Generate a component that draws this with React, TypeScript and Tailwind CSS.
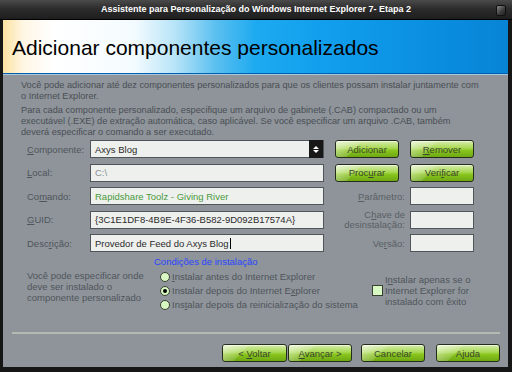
const font = "font-['Liberation_Sans',Arial,sans-serif]";

function U({ children }: { children: React.ReactNode }) {
  return <span className="underline underline-offset-[1px]">{children}</span>;
}

function GreenButton({ children, className = "" }: { children: React.ReactNode; className?: string }) {
  return (
    <div
      className={
        "relative flex h-[18px] w-[64px] items-center justify-center overflow-hidden rounded-[3px] border border-[#262c1c] bg-[linear-gradient(180deg,#d6ecae_0%,#a8d850_45%,#88c41c_60%,#6ea814_100%)] text-[9.5px] text-[#3a4630] shadow-[inset_0_1px_0_#eef8d8] " +
        className
      }
    >
      <span className="absolute left-0 top-0 h-full w-[45%] bg-[linear-gradient(135deg,rgba(255,255,255,0.55)_0%,rgba(255,255,255,0.15)_60%,transparent_61%)]" />
      <span className="relative">{children}</span>
    </div>
  );
}

function Field({ children, className = "" }: { children?: React.ReactNode; className?: string }) {
  return (
    <div
      className={
        "flex h-[18px] items-center border border-[#50555a] bg-[#eef0ee] px-[4px] text-[9.5px] text-[#2a2a2a] " + className
      }
    >
      {children}
    </div>
  );
}

function Radio({ checked = false }: { checked?: boolean }) {
  return (
    <span className="flex h-[10px] w-[10px] shrink-0 items-center justify-center rounded-full border border-[#3a4030] bg-[#d8f8c4]">
      {checked && <span className="h-[4px] w-[4px] rounded-full bg-black" />}
    </span>
  );
}

export default function App() {
  return (
    <div className={`flex h-[372px] w-[512px] flex-col bg-[#161616] ${font}`}>
      {/* title bar */}
      <div className="relative flex h-[20px] items-center justify-center border-b border-black bg-[linear-gradient(180deg,#4a4a4a_0%,#2c2c2c_45%,#1e1e1e_100%)]">
        <span className="text-[9px] font-bold text-white">
          Assistente para Personalização do Windows Internet Explorer 7- Etapa 2
        </span>
        <span className="absolute right-[6px] top-[5px] h-[11px] w-[10px] rounded-[2px] border border-[#101010] bg-[linear-gradient(135deg,#8a8a8a_0%,#3a3a3a_60%,#222_100%)]" />
      </div>

      <div className="mx-[3px] mb-[5px] mr-[4px] flex flex-1 flex-col">
        {/* banner */}
        <div className="flex h-[54px] items-center border-b border-[#0060b0] bg-[linear-gradient(90deg,#fce2a0_0%,#fff6e4_4%,#ffffff_10%,#f4fbff_26%,#b8e4f8_34%,#5cc0f0_42%,#1eaaf0_50%,#12a0ee_62%,#0a8ee0_85%,#0884d6_100%)] pl-[9px] pt-[3px]">
          <span className="text-[21px] text-black">Adicionar componentes personalizados</span>
        </div>

        {/* body */}
        <div className="flex flex-1 flex-col border-t border-[#a8c8e0] bg-[#8e949a] pl-[18px] pr-[10px] pt-[5px] text-[9.5px] leading-[11px] text-[#4a4e54]">
          <div className="whitespace-nowrap text-[9.2px]">
            <p>
              Você pode adicionar até dez componentes personalizados para que os clientes possam instalar juntamente com
              <br />o Internet Explorer.
            </p>
            <p className="mt-[3px]">
              Para cada componente personalizado, especifique um arquivo de gabinete (.CAB) compactado ou um
              <br />executável (.EXE) de extração automática, caso aplicável. Se você especificar um arquivo .CAB, também
              <br />deverá especificar o comando a ser executado.
            </p>
          </div>

          {/* form grid */}
          <div className="ml-[6px] mt-[2px] grid grid-cols-[52px_234px_64px_64px] gap-x-[11px] gap-y-[5.5px] text-[#50555a]">
            <div className="flex h-[18px] items-center"><span><U>C</U>omponente:</span></div>
            <Field className="relative pr-0">
              <span>Axys Blog</span>
              <span className="absolute right-0 top-[-1px] flex h-[18px] w-[14px] flex-col items-center justify-center gap-[1px] bg-[#181818]">
                <span className="h-0 w-0 border-x-[3px] border-b-[3px] border-x-transparent border-b-white" />
                <span className="h-0 w-0 border-x-[3px] border-t-[3px] border-x-transparent border-t-white" />
              </span>
            </Field>
            <GreenButton>Adicionar</GreenButton>
            <GreenButton><U>R</U>emover</GreenButton>

            <div className="flex h-[18px] items-center"><span><U>L</U>ocal:</span></div>
            <Field className="text-[#8a8e92]">C:\</Field>
            <GreenButton>Proc<U>u</U>rar</GreenButton>
            <GreenButton>Veri<U>f</U>icar</GreenButton>

            <div className="flex h-[18px] items-center"><span>Co<U>m</U>ando:</span></div>
            <Field className="border-[#6c7176] bg-[#8e949a] text-[#4c9a3c]">Rapidshare Toolz - Giving River</Field>
            <div className="-mr-[6px] flex h-[18px] items-center justify-end text-[#5a5f64]"><span><U>P</U>arâmetro:</span></div>
            <Field />

            <div className="flex h-[18px] items-center"><span><U>G</U>UID:</span></div>
            <Field>{"{3C1E1DF8-4B9E-4F36-B582-9D092B17574A}"}</Field>
            <div className="-mr-[6px] flex h-[18px] flex-col items-end justify-center text-right leading-[10px] text-[#5a5f64]">
              <span>C<U>h</U>ave de</span>
              <span>desinstalação:</span>
            </div>
            <Field />

            <div className="flex h-[18px] items-center"><span>Desc<U>r</U>ição:</span></div>
            <Field>
              <span>Provedor de Feed do Axys Blog</span>
              <span className="ml-[1px] h-[11px] w-[1px] bg-black" />
            </Field>
            <div className="-mr-[6px] flex h-[18px] items-center justify-end text-[#5a5f64]"><span>Ve<U>r</U>são:</span></div>
            <Field />
          </div>

          {/* install conditions */}
          <div className="ml-[133px] mt-[4px] text-[#2a44ff]">Condições de instalação</div>
          <div className="mt-[3px] flex">
            <div className="ml-[6px] w-[133px] text-[#50555a]">
              <p>Você pode especificar onde</p>
              <p>deve ser instalado o</p>
              <p>componente personalizado</p>
            </div>
            <div className="flex flex-col gap-[3px] pt-[1px] text-[#50555a]">
              <div className="flex items-center gap-[2px]"><Radio /><span><U>I</U>nstalar antes do Internet Explorer</span></div>
              <div className="flex items-center gap-[2px]"><Radio checked /><span>Instalar depois do Internet E<U>x</U>plorer</span></div>
              <div className="flex items-center gap-[2px]"><Radio /><span>Ins<U>t</U>alar depois da reinicialização do sistema</span></div>
            </div>
            <div className="ml-[14px] flex items-center gap-[2px] text-[#50555a]">
              <span className="h-[11px] w-[11px] shrink-0 border border-[#3a4030] bg-[#d8f8c4]" />
              <div>
                <p>I<U>n</U>stalar apenas se o</p>
                <p>Internet Explorer for</p>
                <p>instalado com êxito</p>
              </div>
            </div>
          </div>

          {/* separator */}
          <div className="-ml-[9px] mr-[-2px] mt-[22px] h-[2px] bg-[#b4bab2]" />

          {/* nav buttons */}
          <div className="mt-[10px] flex justify-end">
            <div className="-mr-[2px] flex">
              <GreenButton className="w-[65px]">&lt; <U>V</U>oltar</GreenButton>
              <GreenButton className="ml-[1px]"><U>A</U>vançar &gt;</GreenButton>
              <GreenButton className="ml-[9px]">Cancelar</GreenButton>
              <GreenButton className="ml-[11px]">Ajuda</GreenButton>
            </div>
          </div>
        </div>
      </div>
    </div>
  );
}
